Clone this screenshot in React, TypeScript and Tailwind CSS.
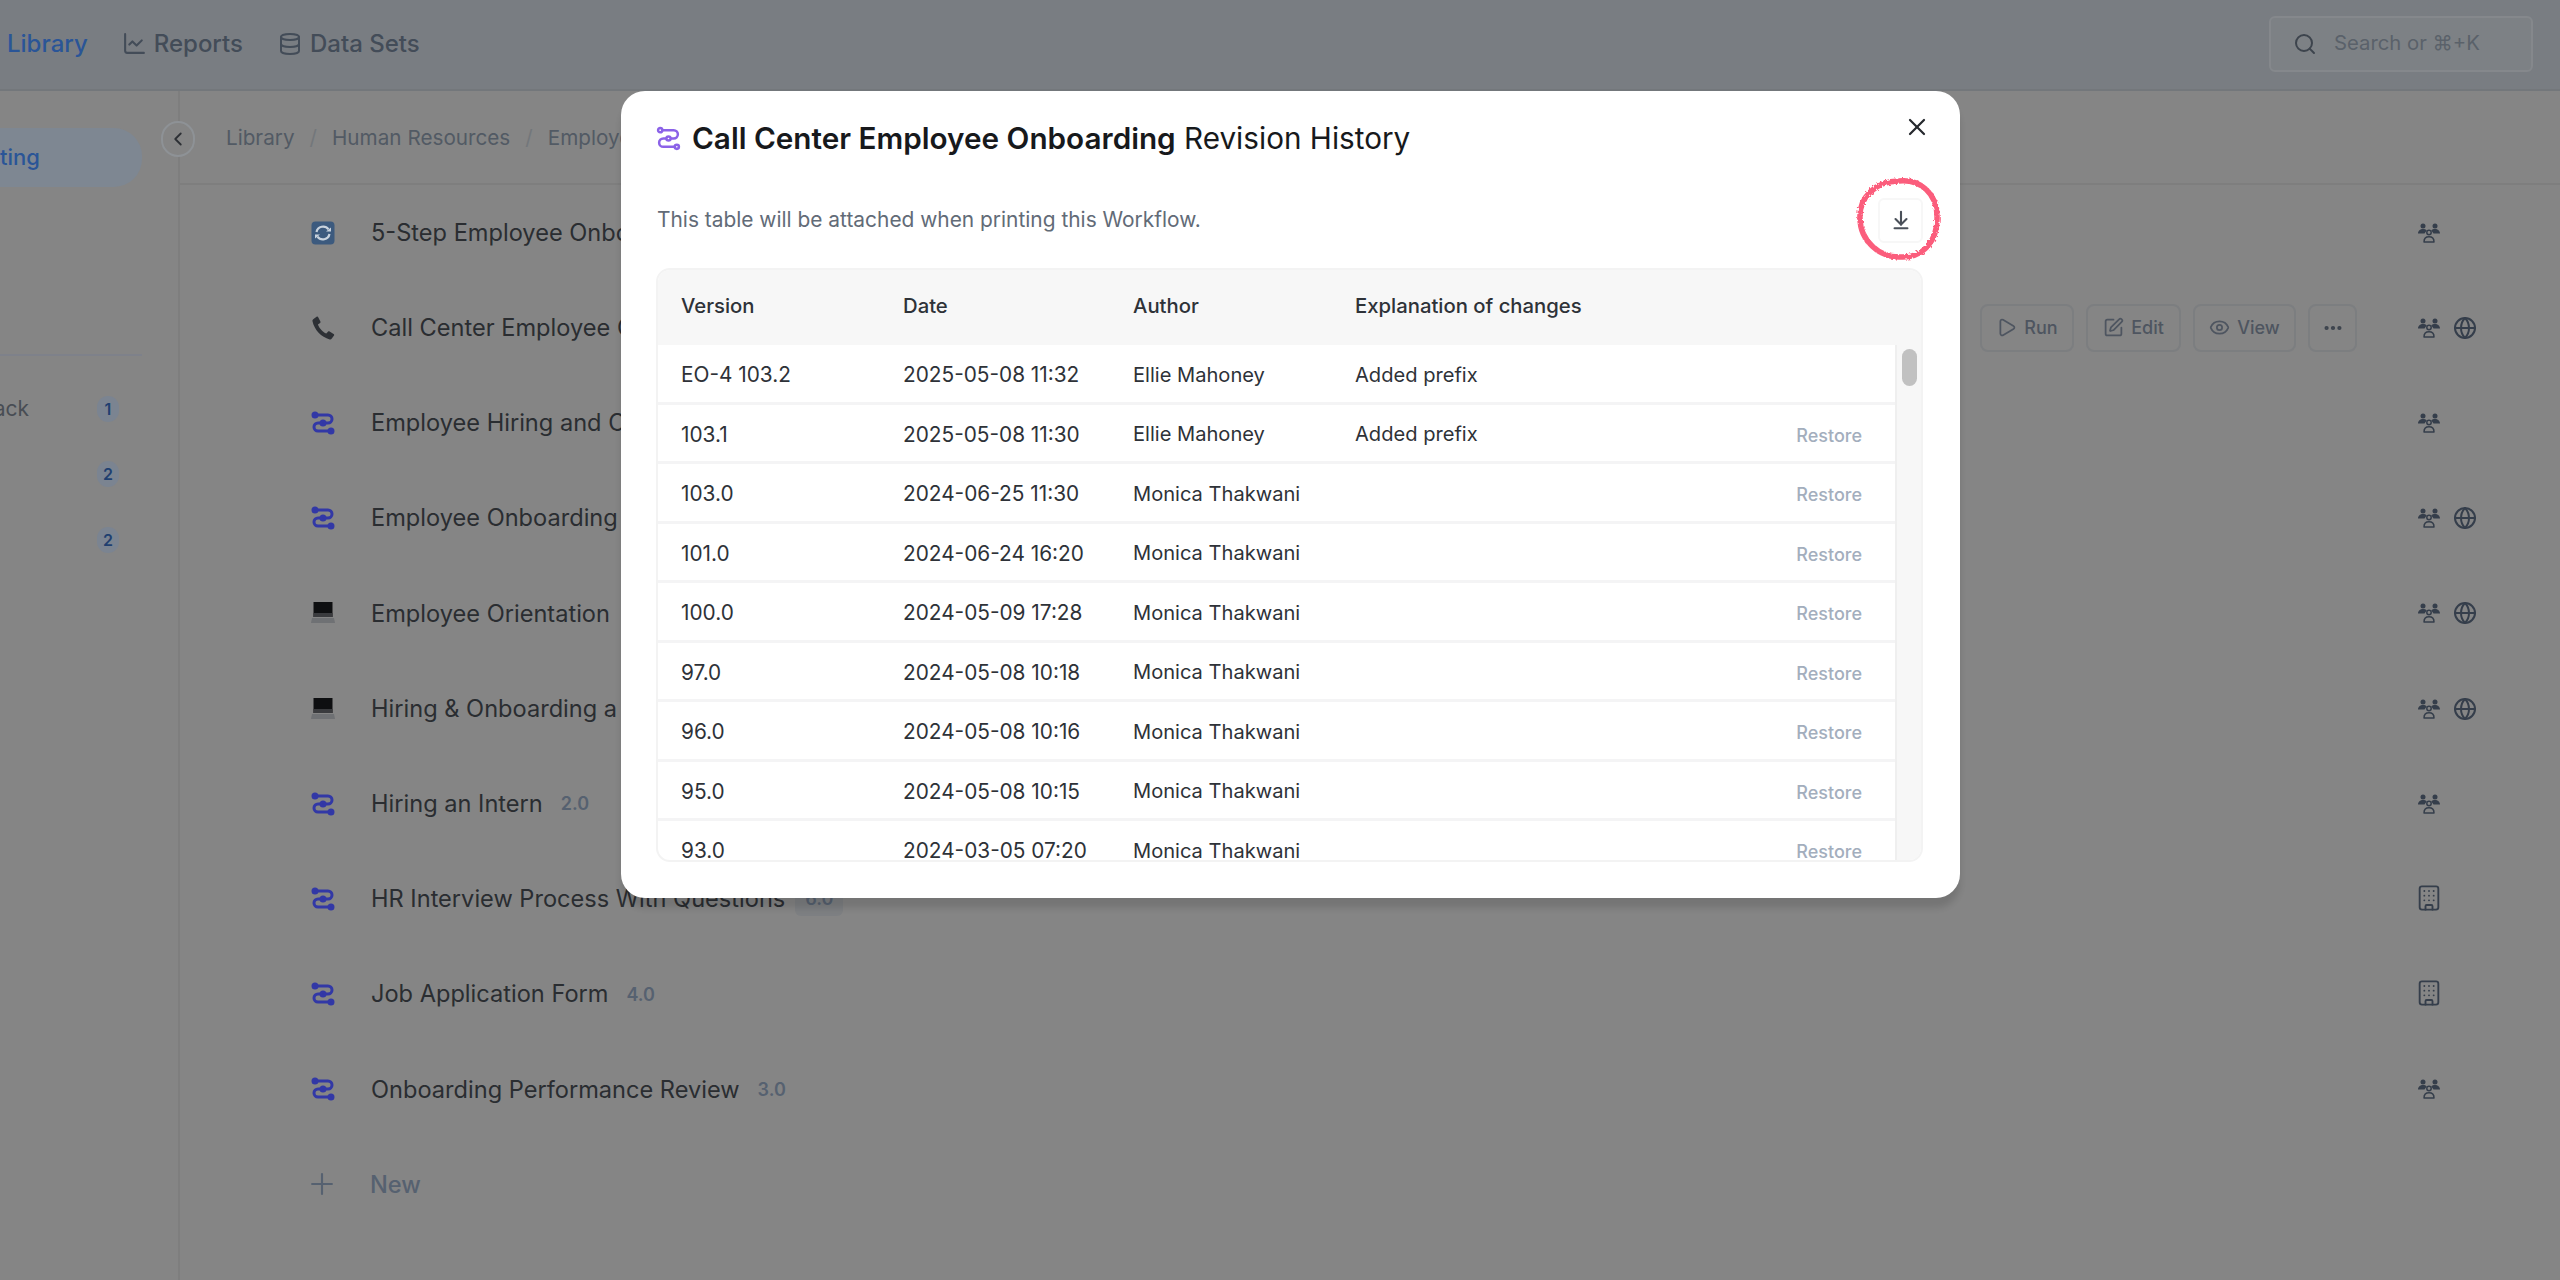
import { ArrowDownToLine, BookOpen, Building, ChartLine, ChevronLeft, Database, Ellipsis, Eye, Globe, Play, Plus, Search, SquarePen, X } from 'lucide-react';

type RowIcon = 'sync' | 'phone' | 'route' | 'laptop';

const ROWS: { icon: RowIcon; name: string; version?: string; scope: ('group' | 'globe' | 'building')[]; actions?: boolean; pill?: boolean }[] = [
  { icon: 'sync', name: '5-Step Employee Onboarding', scope: ['group'] },
  { icon: 'phone', name: 'Call Center Employee Onboarding', scope: ['group', 'globe'], actions: true },
  { icon: 'route', name: 'Employee Hiring and Onboarding', scope: ['group'] },
  { icon: 'route', name: 'Employee Onboarding Checklist', scope: ['group', 'globe'] },
  { icon: 'laptop', name: 'Employee Orientation', scope: ['group', 'globe'] },
  { icon: 'laptop', name: 'Hiring & Onboarding a New Hire', scope: ['group', 'globe'] },
  { icon: 'route', name: 'Hiring an Intern', version: '2.0', scope: ['group'] },
  { icon: 'route', name: 'HR Interview Process With Questions', version: '6.0', scope: ['building'], pill: true },
  { icon: 'route', name: 'Job Application Form', version: '4.0', scope: ['building'] },
  { icon: 'route', name: 'Onboarding Performance Review', version: '3.0', scope: ['group'] },
];

const REVISIONS = [
  { version: 'EO-4 103.2', date: '2025-05-08 11:32', author: 'Ellie Mahoney', note: 'Added prefix', current: true },
  { version: '103.1', date: '2025-05-08 11:30', author: 'Ellie Mahoney', note: 'Added prefix' },
  { version: '103.0', date: '2024-06-25 11:30', author: 'Monica Thakwani' },
  { version: '101.0', date: '2024-06-24 16:20', author: 'Monica Thakwani' },
  { version: '100.0', date: '2024-05-09 17:28', author: 'Monica Thakwani' },
  { version: '97.0', date: '2024-05-08 10:18', author: 'Monica Thakwani' },
  { version: '96.0', date: '2024-05-08 10:16', author: 'Monica Thakwani' },
  { version: '95.0', date: '2024-05-08 10:15', author: 'Monica Thakwani' },
  { version: '93.0', date: '2024-03-05 07:20', author: 'Monica Thakwani' },
];

function RouteIcon({ className, hollow }: { className: string; hollow?: boolean }) {
  return (
    <svg viewBox="0 0 24 24" fill="none" stroke="currentColor" strokeWidth={hollow ? 2.4 : 3} className={className}>
      <path d="M4 4h13a4 4 0 0 1 0 8H7a4 4 0 0 0 0 8h13" strokeLinecap="round" />
      <circle cx="4" cy="4" r="2" fill={hollow ? '#fff' : 'currentColor'} />
      <circle cx="12" cy="12" r="2" fill={hollow ? '#fff' : 'currentColor'} />
      <circle cx="20" cy="20" r="2" fill={hollow ? '#fff' : 'currentColor'} />
    </svg>
  );
}

function SyncIcon() {
  return (
    <svg viewBox="0 0 24 24" className="w-6 h-6">
      <rect x="0.5" y="0.5" width="23" height="23" rx="4" fill="#3c5a7e" />
      <path d="M5.5 11a6.7 6.7 0 0 1 12-2.6" fill="none" stroke="#c9d3de" strokeWidth="2.2" />
      <path d="M18.5 13a6.7 6.7 0 0 1-12 2.6" fill="none" stroke="#c9d3de" strokeWidth="2.2" />
      <path d="M15 10.5h5v-4zM9 13.5H4v4z" fill="#c9d3de" />
    </svg>
  );
}

function PhoneIcon() {
  return (
    <svg viewBox="0 0 24 24" className="w-6 h-6" fill="#2d3035">
      <path d="M2.2 3.2 5.6.8c.7-.4 1.3-.2 1.6.4l2.2 4.3c.3.6.2 1.2-.3 1.6L6.9 8.4c1.2 3.6 4.8 7.6 8.4 9.2l1.6-1.8c.5-.5 1.1-.6 1.7-.3l4 2.4c.6.4.8 1 .4 1.7l-2.2 3c-.5.7-1.2 1-2.1.8C10.200 21.300 3.300 13.800 1.500 5.300c-.2-.9.1-1.600.7-2.100z" />
    </svg>
  );
}

function LaptopIcon() {
  return (
    <svg viewBox="0 0 24 24" className="w-6 h-6">
      <path d="M2.500 1h19v15h-19z" fill="#0e0f11" />
      <path d="M2.500 12h19v4h-19z" fill="#3a3b3e" />
      <path d="M1 17h22l1 5H0z" fill="#6f7174" />
    </svg>
  );
}

function GroupIcon() {
  return (
    <svg viewBox="0 0 24 20" className="w-6 h-5" fill="#353e4b">
      <circle cx="6" cy="3" r="2.500" />
      <circle cx="18" cy="3" r="2.500" />
      <path d="M1 10.500c0-2.600 2.200-4.500 5-4.500 1.500 0 2.800.5 3.700 1.400L7.500 10.500zM23 10.500c0-2.600-2.200-4.500-5-4.500-1.500 0-2.800.5-3.700 1.400l2.200 3.100z" />
      <circle cx="12" cy="9.500" r="2.200" fill="none" stroke="#353e4b" strokeWidth="1.500" />
      <path d="M7 19c0-3.600 2.200-5.200 5-5.200s5 1.600 5 5.200z" fill="none" stroke="#353e4b" strokeWidth="1.500" strokeLinejoin="round" />
    </svg>
  );
}

function ListIcon({ kind }: { kind: RowIcon }) {
  if (kind === 'sync') return <SyncIcon />;
  if (kind === 'phone') return <PhoneIcon />;
  if (kind === 'laptop') return <LaptopIcon />;
  return <RouteIcon className="w-6 h-6 text-[#3238a6]" />;
}

function ActionButton({ icon, label, width }: { icon: React.ReactNode; label: string; width: string }) {
  return (
    <div className={'flex items-center justify-center gap-[7px] h-[48px] rounded-[8px] border-2 border-[#7c7e80] text-[18px] font-medium text-[#4e5560] ' + width}>
      {icon}
      {label}
    </div>
  );
}

function SidebarItem({ label, count }: { label: string; count?: number }) {
  return (
    <div className="flex items-center h-[65.500px] w-[142px] relative">
      <span className="w-[29px] flex justify-end text-[21px] text-[#484d54] whitespace-nowrap">{label}</span>
      {count ? (
        <span className="ml-auto mr-[23px] w-[22px] h-[26px] rounded-full bg-[#7b8491] text-[#1f3f70] text-[16px] font-semibold flex items-center justify-center">
          {count}
        </span>
      ) : null}
    </div>
  );
}

function PageBehind() {
  return (
    <div className="w-full h-full flex flex-col bg-[#858585]">
      {/* top nav */}
      <div className="h-[91px] pb-[2px] flex items-center bg-[#797d82] border-b-2 border-[#73777b] shrink-0">
        <div className="flex items-center -ml-[23px] text-[24px] font-medium">
          <BookOpen className="w-[24px] h-[24px] text-[#2a5597] mr-[6px]" />
          <span className="text-[#2a5597]">Library</span>
          <ChartLine className="w-[25px] h-[25px] ml-[34px] mr-[7px] text-[#434c58]" />
          <span className="text-[#434c58]">Reports</span>
          <Database className="w-[24px] h-[26px] ml-[35px] mr-[8px] text-[#434c58]" />
          <span className="text-[#434c58]">Data Sets</span>
        </div>
        <div className="ml-auto mr-[27px] w-[264px] h-[56px] rounded-[6px] border-2 border-[#85888c] bg-[#7d8185] flex items-center pl-[22px]">
          <Search className="w-[24px] h-[24px] text-[#3d444d]" />
          <span className="ml-[17px] text-[20.300px] text-[#5a616a] whitespace-nowrap">Search or ⌘+K</span>
        </div>
      </div>

      <div className="flex-1 flex min-h-0">
        {/* left rail, cut off by the window edge */}
        <div className="w-[180px] shrink-0 border-r-2 border-[#7e7e7e] pt-[37px] overflow-hidden">
          <div className="w-[142px] h-[59px] rounded-r-[28px] bg-[#7e8792] flex items-center overflow-hidden">
            <span className="w-[40px] flex justify-end text-[22px] font-medium text-[#2a5597] whitespace-nowrap">Accounting</span>
          </div>
          <div className="w-[142px] border-b-2 border-[#7e818a] mt-[167px]" />
          <div className="mt-[20px]">
            <SidebarItem label="Feedback" count={1} />
            <SidebarItem label="" count={2} />
            <SidebarItem label="" count={2} />
          </div>
        </div>

        <div className="flex-1 flex flex-col min-w-0 relative">
          <div className="absolute -left-[19px] top-[30px] w-[34px] h-[36px] rounded-full border-2 border-[#8e9296] bg-[#858585] flex items-center justify-center">
            <ChevronLeft className="w-[22px] h-[22px] text-[#2d3035]" />
          </div>
          {/* breadcrumb */}
          <div className="h-[94px] pt-[2px] border-b-2 border-[#7e7e7e] flex items-center pl-[46px] gap-[15px] text-[20.700px] text-[#525a64] shrink-0">
            <span>Library</span>
            <span className="text-[#73777b]">/</span>
            <span>Human Resources</span>
            <span className="text-[#73777b]">/</span>
            <span>Employee Onboarding</span>
          </div>
          {ROWS.map((row) => (
            <div key={row.name} className="h-[95.200px] flex items-center pl-[131px] pr-[83px] shrink-0">
              <ListIcon kind={row.icon} />
              <span className="ml-[36px] text-[23.600px] text-[#2a2d31] whitespace-nowrap">{row.name}</span>
              {row.version ? (
                <span className={'text-[18px] font-semibold text-[#566170] ' + (row.pill ? 'ml-[10px] px-[10px] py-[4px] rounded-[6px] bg-[#7d7f82]' : 'ml-[18px]')}>
                  {row.version}
                </span>
              ) : null}
              <div className="ml-auto flex items-center gap-[60px]">
                {row.actions ? (
                  <div className="flex items-center gap-[12px]">
                    <ActionButton icon={<Play className="w-[21px] h-[21px]" />} label="Run" width="w-[94px]" />
                    <ActionButton icon={<SquarePen className="w-[21px] h-[21px]" />} label="Edit" width="w-[95px]" />
                    <ActionButton icon={<Eye className="w-[21px] h-[21px]" />} label="View" width="w-[103px]" />
                    <div className="w-[49px] h-[48px] rounded-[8px] border-2 border-[#7c7e80] flex items-center justify-center text-[#3c434d]">
                      <Ellipsis className="w-[22px] h-[22px]" strokeWidth={2.6} />
                    </div>
                  </div>
                ) : null}
                <div className="w-[60px] flex items-center gap-[12px]">
                  {row.scope.map((s) =>
                    s === 'group' ? (
                      <GroupIcon key={s} />
                    ) : s === 'globe' ? (
                      <Globe key={s} className="w-[24px] h-[24px] text-[#353e4b]" />
                    ) : (
                      <Building key={s} className="w-[28px] h-[28px] -ml-[2px] -mt-[2px] text-[#353e4b]" strokeWidth={1.6} />
                    ),
                  )}
                </div>
              </div>
            </div>
          ))}
          <div className="h-[95px] flex items-center pl-[125px] text-[#566170] shrink-0">
            <Plus className="w-[34px] h-[34px]" strokeWidth={1.5} />
            <span className="ml-[31px] text-[23.600px] font-medium">New</span>
          </div>
        </div>
      </div>
    </div>
  );
}

function RevisionModal() {
  return (
    <div className="absolute left-[621px] top-[91px] w-[1339px] h-[807px] bg-white rounded-[24px] shadow-[0_10px_6px_rgba(0,0,0,0.12)] pl-[35px] pr-[37px] flex flex-col">
      <div className="flex items-center h-[94px] shrink-0">
        <RouteIcon className="w-[25px] h-[25px] text-[#8b62e8]" hollow />
        <h2 className="ml-[11px] text-[29.700px] text-[#17191c] whitespace-nowrap">
          <span className="font-semibold">Call Center Employee Onboarding</span> Revision History
        </h2>
      </div>
      <X className="absolute right-[29px] top-[22px] w-[28px] h-[28px] text-[#26292e]" strokeWidth={1.9} />
      <div className="flex items-center justify-between h-[62px] mt-[4px] shrink-0">
        <p className="pl-[1px] text-[20.900px] text-[#626b77]">This table will be attached when printing this Workflow.</p>
        <div className="w-[45px] h-[45px] rounded-[6px] border-2 border-[#f7f7f7] flex items-center justify-center">
          <ArrowDownToLine className="w-[22px] h-[22px] text-[#4a5059]" strokeWidth={2.3} />
        </div>
      </div>

      {/* table */}
      <div className="mt-[17px] h-[594px] rounded-[14px] border-2 border-[#f3f3f3] overflow-hidden flex flex-col shrink-0">
        <div className="h-[75px] pb-[3px] bg-[#f7f7f7] grid grid-cols-[222px_230px_222px_1fr] items-center pl-[23px] text-[20.300px] font-medium text-[#2e3238] shrink-0">
          <span>Version</span>
          <span>Date</span>
          <span>Author</span>
          <span>Explanation of changes</span>
        </div>
        <div className="flex-1 flex min-h-0">
          <div className="flex-1 min-w-0 overflow-hidden">
            {REVISIONS.map((rev) => (
              <div key={rev.version} className="h-[59.500px] pt-[3px] border-b-[3px] border-[#f4f4f5] grid grid-cols-[222px_230px_222px_1fr_auto] items-center pl-[23px] pr-[33px] text-[20.100px] text-[#2e3238]">
                <span className="text-[20.800px]">{rev.version}</span>
                <span className="text-[20.800px]">{rev.date}</span>
                <span>{rev.author}</span>
                <span>{rev.note}</span>
                {rev.current ? null : <span className="pt-[2px] text-[18px] font-medium text-[#a3aebd]">Restore</span>}
              </div>
            ))}
          </div>
          <div className="w-[26px] bg-[#f7f7f7] border-l-2 border-[#efefef] shrink-0 pt-[4px] pl-[5px]">
            <div className="w-[15px] h-[37px] rounded-full bg-[#c1c1c1]" />
          </div>
        </div>
      </div>
    </div>
  );
}

export default function App() {
  return (
    <div className="relative w-[2560px] h-[1280px] overflow-hidden font-['Inter',sans-serif]">
      <PageBehind />
      <RevisionModal />
      {/* hand drawn marker round the download button */}
      <svg className="absolute left-[1849px] top-[169px] w-[100px] h-[100px]" viewBox="0 0 100 100" fill="none">
        <defs>
          <filter id="rough" x="-10%" y="-10%" width="120%" height="120%">
            <feTurbulence type="fractalNoise" baseFrequency="0.45" numOctaves="2" seed="4" />
            <feDisplacementMap in="SourceGraphic" scale="4" />
          </filter>
        </defs>
        <path
          d="M50 12C72 10 88 25 88 47c1 25-14 42-36 41C31 89 11 72 11 49 10 29 26 12 50 12z"
          stroke="#fb5d7b"
          strokeWidth="5.500"
          filter="url(#rough)"
        />
      </svg>
    </div>
  );
}
